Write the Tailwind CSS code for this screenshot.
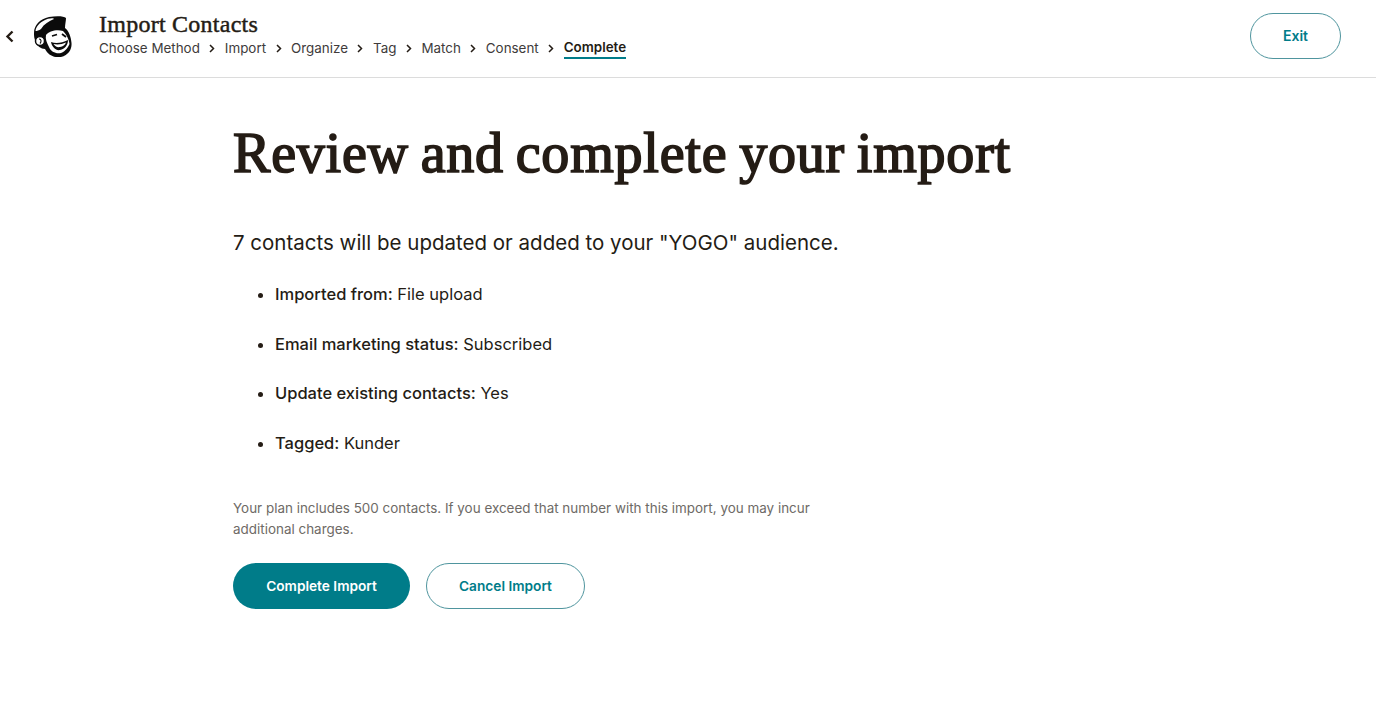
<!DOCTYPE html>
<html lang="en">
<head>
    <meta charset="UTF-8">
    <meta name="viewport" content="width=device-width, initial-scale=1.0">
    <title>Import Contacts</title>
    <script src="https://cdn.jsdelivr.net/npm/@tailwindcss/browser@4"></script>
</head>
<body class="bg-white font-['Inter',sans-serif] text-[#241c15] h-[722px] overflow-hidden">
    <!-- Top bar -->
    <header class="h-[78px] border-b border-[#dcdcdc] flex items-center pl-[5px] pr-[35px]">
        <button class="w-[10px] h-[14px] mt-[-5px] flex items-center justify-center">
            <svg width="10" height="13" viewBox="0 0 10 13" fill="none" stroke="#241c15" stroke-width="2.4"><path d="M7.5 1.5 L2.5 6.5 L7.5 11.5"/></svg>
        </button>
        <svg class="ml-[18px] mt-[-4px]" width="39" height="41" viewBox="0 0 39 41">
            <path d="M1 17 C1 9 7 3 16 1 C23 0 31 0 33 2 C33 5 32 8 32 12 C36 15 38 21 38.500 27 C39 33 36 39 28 41 C21 42 15 39 12 33 C8 33 4 30 3 26 C1 23 1 20 1 17 Z" fill="#0b0b0b"/>
            <path d="M2.500 15 C3 10 8 5 15 2.800 C18 2 21 2 21 3 C16 5 11 8 8 13 C6 14.500 4 15 2.500 15 Z" fill="#fff"/>
            <path d="M13 19 C16 15 24 13 30 15 C33 18 36 23 36.500 28 C35 31 33 35 28 37 C23 38 18 36 16 31 C14 27 12 23 13 19 Z" fill="#fff"/>
            <path d="M18 26 C23 28 29 27 35 24 C35 29 32 33 27 34 C23 35 19 31 18 26 Z" fill="#0b0b0b"/>
            <path d="M20.500 28 C24 29 29 28.500 33 26.500 C32 29 30 30.500 27 31 C24 31.500 22 30.500 20.500 28 Z" fill="#fff"/>
            <path d="M19 20 L24 18.500 M29 18 L33 21" stroke="#0b0b0b" stroke-width="1.8" fill="none"/>
            <circle cx="7" cy="25" r="4.5" fill="#fff" stroke="#0b0b0b" stroke-width="1.500"/>
            <path d="M6 23 C8.500 23 8.500 26 7 27.500" stroke="#0b0b0b" stroke-width="1.100" fill="none"/>
        </svg>
        <div class="ml-[27px] mt-[-8px]">
            <div class="font-['Liberation_Serif',serif] text-[24px] leading-[28px] tracking-[0.25px] [-webkit-text-stroke:0.45px_#241c15] text-[#241c15]">Import Contacts</div>
            <nav class="flex items-center gap-[9.5px] text-[13.4px] leading-[20px] mt-[-1px] text-[#403b3b]">
                <span>Choose Method</span>
                <svg width="6" height="9" viewBox="0 0 6 9" fill="none" stroke="#241c15" stroke-width="1.5"><path d="M1 1 L4.500 4.500 L1 8"/></svg>
                <span>Import</span>
                <svg width="6" height="9" viewBox="0 0 6 9" fill="none" stroke="#241c15" stroke-width="1.5"><path d="M1 1 L4.500 4.500 L1 8"/></svg>
                <span>Organize</span>
                <svg width="6" height="9" viewBox="0 0 6 9" fill="none" stroke="#241c15" stroke-width="1.5"><path d="M1 1 L4.500 4.500 L1 8"/></svg>
                <span>Tag</span>
                <svg width="6" height="9" viewBox="0 0 6 9" fill="none" stroke="#241c15" stroke-width="1.5"><path d="M1 1 L4.500 4.500 L1 8"/></svg>
                <span>Match</span>
                <svg width="6" height="9" viewBox="0 0 6 9" fill="none" stroke="#241c15" stroke-width="1.5"><path d="M1 1 L4.500 4.500 L1 8"/></svg>
                <span>Consent</span>
                <svg width="6" height="9" viewBox="0 0 6 9" fill="none" stroke="#241c15" stroke-width="1.5"><path d="M1 1 L4.500 4.500 L1 8"/></svg>
                <span class="font-semibold text-[#241c15] border-b-2 border-[#007c89]">Complete</span>
            </nav>
        </div>
        <button class="ml-auto mt-[-6px] w-[91px] h-[46px] rounded-full border-[1.5px] border-[#4f959e] text-[#007c89] text-[14px] font-semibold">Exit</button>
    </header>

    <main class="pl-[233px]">
        <h1 class="font-['Liberation_Serif',serif] text-[56px] leading-[64px] tracking-[0.8px] [word-spacing:-3px] [-webkit-text-stroke:1.7px_#241c15] pt-[43px] text-[#241c15]">Review and complete your import</h1>
        <p class="text-[20.5px] leading-[30px] mt-[43px]">7 contacts will be updated or added to your "YOGO" audience.</p>
        <ul class="mt-[23px] pl-[42px] list-disc text-[16.5px] leading-[26px] flex flex-col gap-[23.7px]">
            <li><strong class="font-medium">Imported from:</strong> File upload</li>
            <li><strong class="font-medium">Email marketing status:</strong> Subscribed</li>
            <li><strong class="font-medium">Update existing contacts:</strong> Yes</li>
            <li><strong class="font-medium">Tagged:</strong> Kunder</li>
        </ul>
        <p class="w-[600px] text-[13.45px] leading-[21px] text-[#6e6a66] mt-[42px]">Your plan includes 500 contacts. If you exceed that number with this import, you may incur additional charges.</p>
        <div class="flex gap-[16px] mt-[23px]">
            <button class="w-[177px] h-[46px] rounded-full bg-[#007c89] text-white text-[13.7px] font-semibold">Complete Import</button>
            <button class="w-[159px] h-[46px] rounded-full border-[1.5px] border-[#4f959e] text-[#007c89] text-[13.7px] font-semibold">Cancel Import</button>
        </div>
    </main>
</body>
</html>
